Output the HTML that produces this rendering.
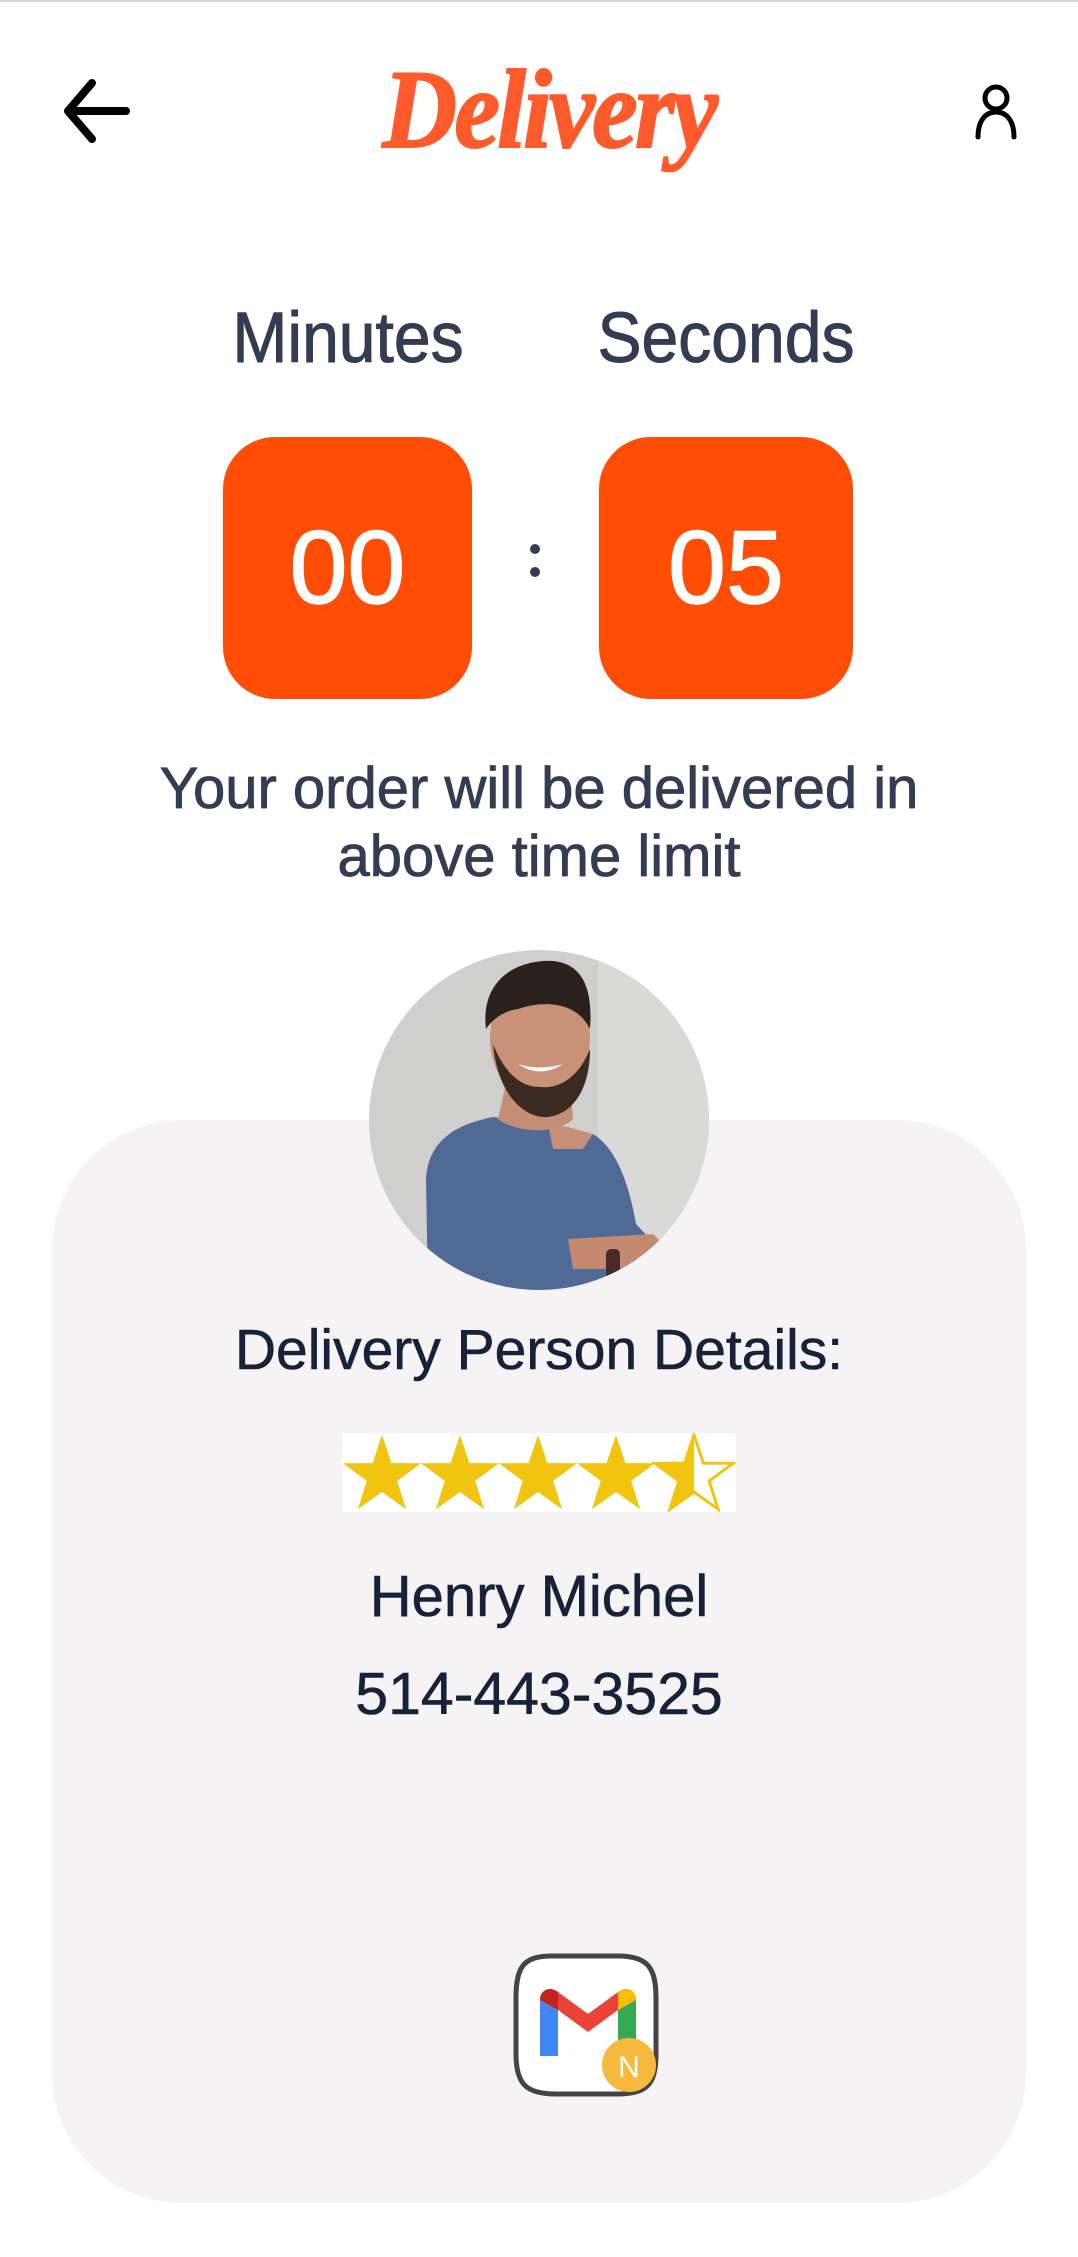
<!DOCTYPE html>
<html><head><meta charset="utf-8">
<style>
html,body{margin:0;padding:0;}
body{width:1078px;height:2257px;background:#fff;position:relative;overflow:hidden;font-family:"Liberation Sans","DejaVu Sans",sans-serif;}
.abs{position:absolute;}
.topline{left:0;top:0;width:1078px;height:2px;background:#d8d8d8;}
.title{left:289px;top:40px;width:520px;text-align:center;font-family:"Liberation Serif",serif;font-weight:bold;font-style:italic;font-size:112px;color:#ff5a2b;letter-spacing:-3px;transform:scaleX(0.92);line-height:140px;-webkit-text-stroke:2px #ff5a2b;}
.lbl{top:294px;font-size:71px;color:#333d52;width:360px;text-align:center;line-height:90px;transform:scaleX(0.93);-webkit-text-stroke:1px #333d52;}
.box{top:437px;height:262px;background:#ff4d06;border-radius:52px;color:#fff;font-size:104px;text-align:center;line-height:262px;-webkit-text-stroke:1.5px #fff;}
.msg{left:0;width:1078px;top:755px;text-align:center;font-size:58px;color:#333d52;line-height:68px;-webkit-text-stroke:0.8px #333d52;}
.card{left:52px;top:1120px;width:974px;height:1083px;background:#f5f3f4;border-radius:130px;}
.dark{color:#152238;text-align:center;left:0;width:1078px;-webkit-text-stroke:0.6px #152238;}
</style></head><body>
<div class="abs topline"></div>
<svg class="abs" style="left:62px;top:78px" width="70" height="66" viewBox="0 0 70 66">
<path d="M30 5 L6 33 L30 61 M6 33 L64 33" fill="none" stroke="#000" stroke-width="8" stroke-linecap="round" stroke-linejoin="round"/></svg>
<div class="abs title">Delivery</div>
<svg class="abs" style="left:972px;top:82px" width="48" height="58" viewBox="0 0 48 58">
<circle cx="24" cy="16" r="11" fill="none" stroke="#000" stroke-width="5"/>
<path d="M6 55 C6 38 14 30 24 30 C34 30 42 38 42 55" fill="none" stroke="#000" stroke-width="5" stroke-linecap="round"/></svg>
<div class="abs lbl" style="left:168px">Minutes</div>
<div class="abs lbl" style="left:546px">Seconds</div>
<div class="abs box" style="left:223px;width:249px">00</div>
<div class="abs" style="left:530px;top:544px;width:10px;height:10px;border-radius:5px;background:#333d52"></div>
<div class="abs" style="left:530px;top:567px;width:10px;height:10px;border-radius:5px;background:#333d52"></div>
<div class="abs box" style="left:599px;width:254px">05</div>
<div class="abs msg">Your order will be delivered in<br>above time limit</div>
<div class="abs card"></div>
<svg class="abs" style="left:368px;top:949px" width="342" height="342" viewBox="0 0 342 342">
<defs><clipPath id="c"><circle cx="171" cy="171" r="170"/></clipPath></defs>
<g clip-path="url(#c)">
<rect width="342" height="342" fill="#cfcfcd"/>
<rect x="230" width="112" height="342" fill="#d9d9d7"/>
<path d="M60 342 L58 230 C60 190 90 175 125 168 L180 175 L225 185 C250 200 262 240 268 275 L282 290 L300 300 L290 342 Z" fill="#4f6b95"/>
<path d="M180 175 L200 178 L225 185 L215 200 L185 200 Z" fill="#c49079"/>
<path d="M200 290 L285 285 L300 300 L280 320 L205 320 Z" fill="#c48a70"/>
<path d="M130 170 C135 150 140 120 145 110 L200 110 L205 170 C190 185 150 185 130 170Z" fill="#c48e74"/>
<ellipse cx="172" cy="90" rx="50" ry="62" fill="#c99178"/>
<path d="M125 95 C130 150 160 170 180 168 C205 165 222 140 222 100 C210 130 190 140 172 138 C150 138 135 120 125 95Z" fill="#3a2a22"/>
<path d="M118 80 C112 30 150 10 185 12 C215 15 225 40 222 80 C210 55 180 50 150 60 C135 62 125 70 118 80Z" fill="#2a211d"/>
<path d="M150 115 Q172 130 195 115 Q172 122 150 115Z" fill="#fff"/>
<rect x="238" y="300" width="14" height="30" rx="5" fill="#4a2a28"/>
</g></svg>
<div class="abs dark" style="top:1316px;font-size:57px;line-height:68px">Delivery Person Details:</div>
<svg class="abs" style="left:342px;top:1433px" width="394" height="79" viewBox="0 0 394 79">
<rect width="394" height="79" fill="#fff"/>
<defs><path id="s" d="M40 2 L49.4 30.1 L79 30.3 L55.2 47.9 L64.1 76.2 L40 59 L15.9 76.2 L24.8 47.9 L1 30.3 L30.6 30.1 Z"/>
<clipPath id="h"><rect x="0" y="0" width="40" height="79"/></clipPath></defs>
<use href="#s" fill="#f1c40f"/>
<use href="#s" x="78" fill="#f1c40f"/>
<use href="#s" x="156" fill="#f1c40f"/>
<use href="#s" x="234" fill="#f1c40f"/>
<g transform="translate(312,0)"><use href="#s" fill="none" stroke="#f1c40f" stroke-width="3"/><use href="#s" fill="#f1c40f" clip-path="url(#h)"/></g>
</svg>
<div class="abs dark" style="top:1563px;font-size:58px;line-height:68px">Henry Michel</div>
<div class="abs dark" style="top:1660px;font-size:59px;line-height:68px">514-443-3525</div>
<svg class="abs" style="left:512px;top:1952px" width="150" height="150" viewBox="0 0 150 150">
<path d="M40 4 H106 C136 4 144 16 144 46 V102 C144 134 134 142 104 142 H44 C14 142 4 132 4 102 V46 C4 14 12 4 40 4Z" fill="#fff" stroke="#444" stroke-width="5"/>
<path d="M28 48 V104 H46 V58Z" fill="#4285f4"/>
<path d="M106 58 V104 H124 V48Z" fill="#34a853"/>
<path d="M28 48 L46 58 L76 80 L106 58 L124 48 C124 38 114 34 106 40 L76 62 L46 40 C38 34 28 38 28 48Z" fill="#ea4335"/>
<path d="M28 48 C28 38 38 34 46 40 V58Z" fill="#c5221f"/>
<path d="M106 40 C114 34 124 38 124 48 L106 58Z" fill="#fbbc04"/>
<circle cx="117" cy="113" r="27" fill="#f6b93b"/>
<text x="117" y="125" font-family="Liberation Sans,sans-serif" font-size="30" fill="#fff" text-anchor="middle">N</text>
</svg>
</body></html>
